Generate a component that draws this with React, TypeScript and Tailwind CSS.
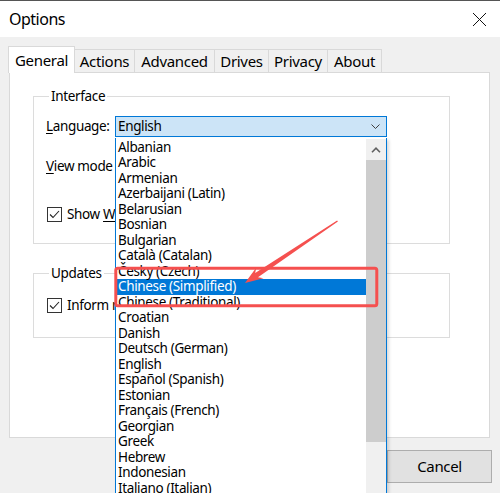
import React from "react";

const tabs = [
  { label: "General", width: "w-[67px]" },
  { label: "Actions", width: "w-[61px]" },
  { label: "Advanced", width: "w-[81px]" },
  { label: "Drives", width: "w-[55px]" },
  { label: "Privacy", width: "w-[60px]" },
  { label: "About", width: "w-[55px]" },
];

const languages = [
  "Albanian",
  "Arabic",
  "Armenian",
  "Azerbaijani (Latin)",
  "Belarusian",
  "Bosnian",
  "Bulgarian",
  "Català (Catalan)",
  "Česky (Czech)",
  "Chinese (Simplified)",
  "Chinese (Traditional)",
  "Croatian",
  "Danish",
  "Deutsch (German)",
  "English",
  "Español (Spanish)",
  "Estonian",
  "Français (French)",
  "Georgian",
  "Greek",
  "Hebrew",
  "Indonesian",
  "Italiano (Italian)",
  "Japanese",
  "Korean",
];

const selectedLanguage = "Chinese (Simplified)";

// rows under the open dropdown are clipped where the list starts
function Checkbox({ label }: { label: React.ReactNode }) {
  return (
    <div className="flex items-center gap-[5px] ml-px h-[15px] w-[68px] overflow-hidden">
      <span className="w-[15px] h-[15px] border border-[#333] bg-white flex items-center justify-center shrink-0">
        <svg width="13" height="13" viewBox="0 0 13 13" fill="none">
          <path d="M2 6.5 L5 9.5 L11 3" stroke="#222" strokeWidth="1.1" />
        </svg>
      </span>
      <span className="whitespace-nowrap">{label}</span>
    </div>
  );
}

function GroupBox({ title, className, children }: { title: string; className?: string; children: React.ReactNode }) {
  return (
    <fieldset className={`w-[417px] border border-[#dcdcdc] pl-[12px] ${className ?? ""}`}>
      <legend className="ml-[3px] px-[2px] leading-[18px]">{title}</legend>
      {children}
    </fieldset>
  );
}

function LanguageDropdown() {
  return (
    <div className="absolute left-[115px] top-[138px] w-[272px] h-[400px] bg-white border-x border-[#0078d7] flex shadow-[2px_2px_3px_rgba(0,0,0,0.15)]">
      <ul className="w-[250px] pt-[1.5px]">
        {languages.map((lang) => (
          <li
            key={lang}
            className={`h-[15.5px] leading-[15.5px] pl-[2px] whitespace-nowrap ${
              lang === selectedLanguage ? "bg-[#0078d7] text-white" : "text-black"
            }`}
          >
            {lang}
          </li>
        ))}
      </ul>
      {/* scrollbar */}
      <div className="w-[20px] mt-px flex flex-col bg-[#f0f0f0]">
        <div className="h-[21px] flex items-center justify-center">
          <svg width="10" height="6" viewBox="0 0 10 6" fill="none">
            <path d="M1 5.2 L5 1.2 L9 5.2" stroke="#606060" strokeWidth="1.6" />
          </svg>
        </div>
        <div className="h-[282px] bg-[#cdcdcd]" />
      </div>
    </div>
  );
}

export default function App() {
  return (
    <div
      className="relative w-[500px] h-[493px] overflow-hidden bg-[#f0f0f0] text-[13.5px] tracking-[-0.35px] text-black"
      style={{ fontFamily: '"Noto Sans", "Open Sans", sans-serif' }}
    >
      {/* title bar */}
      <div className="h-[37px] bg-white border-t border-[#555] flex items-center justify-between pl-[9px] pr-[13px]">
        <span className="text-[16px] tracking-[-0.5px]">Options</span>
        <svg width="15" height="15" viewBox="0 0 15 15" fill="none">
          <path d="M1 1 L14 14 M14 1 L1 14" stroke="#111" strokeWidth="1" />
        </svg>
      </div>

      {/* tabs */}
      <div className="flex items-end pl-[8px] mt-[9px] text-[15px] tracking-[-0.3px]">
        {tabs.map((tab, i) =>
          i === 0 ? (
            <div
              key={tab.label}
              className={`${tab.width} h-[27px] relative z-10 -mb-px bg-white border border-b-0 border-[#d9d9d9] flex items-center justify-center`}
            >
              {tab.label}
            </div>
          ) : (
            <div
              key={tab.label}
              className={`${tab.width} h-[23px] -ml-px bg-[#f0f0f0] border border-b-0 border-[#d9d9d9] flex items-center justify-center`}
            >
              {tab.label}
            </div>
          )
        )}
      </div>

      {/* panel */}
      <div className="ml-[9px] w-[481px] h-[366px] bg-white border border-[#d9d9d9] pl-[23px]">
        <GroupBox title="Interface" className="mt-[14px] pb-[21px]">
          <div className="mt-[11px] flex items-center h-[21px]">
            <span className="w-[69px] whitespace-nowrap">
              <span className="underline underline-offset-2">L</span>anguage:
            </span>
            <div className="w-[272px] h-[21px] bg-[#cce4f7] border border-[#0078d7] flex items-center justify-between pl-[2px] pr-[6px]">
              <span>English</span>
              <svg width="9" height="5" viewBox="0 0 9 5" fill="none">
                <path d="M0.5 0.5 L4.5 4.5 L8.5 0.5" stroke="#404040" strokeWidth="1" />
              </svg>
            </div>
          </div>
          <div className="mt-[19px] flex items-center h-[21px]">
            <span className="w-[68px] whitespace-nowrap">
              <span className="underline underline-offset-2">V</span>iew mode
            </span>
          </div>
          <div className="mt-[30px]">
            <Checkbox
              label={
                <>
                  Show <span className="underline underline-offset-2">W</span>indows context menu
                </>
              }
            />
          </div>
        </GroupBox>

        <GroupBox title="Updates" className="mt-[20px] pb-[24px]">
          <div className="mt-[16px]">
            <Checkbox label="Inform me about updates" />
          </div>
        </GroupBox>
      </div>

      {/* buttons */}
      <div className="flex justify-end pr-[8px] mt-[12px]">
        <button type="button" className="w-[105px] h-[33px] bg-[#e1e1e1] border border-[#adadad] text-[15px]">
          Cancel
        </button>
      </div>

      <LanguageDropdown />

      {/* annotation: red box and arrow */}
      <svg className="absolute inset-0 pointer-events-none" width="500" height="493" viewBox="0 0 500 493">
        <rect x="115.8" y="268.2" width="261" height="37.6" rx="2" fill="none" stroke="#f5504f" strokeWidth="3" />
        <polygon
          points="337.9,221.6 258,277.3 263.5,278.3 245,283 256.3,267.5 255.2,273.1 337.1,220.4"
          fill="#f5504f"
        />
      </svg>
    </div>
  );
}
